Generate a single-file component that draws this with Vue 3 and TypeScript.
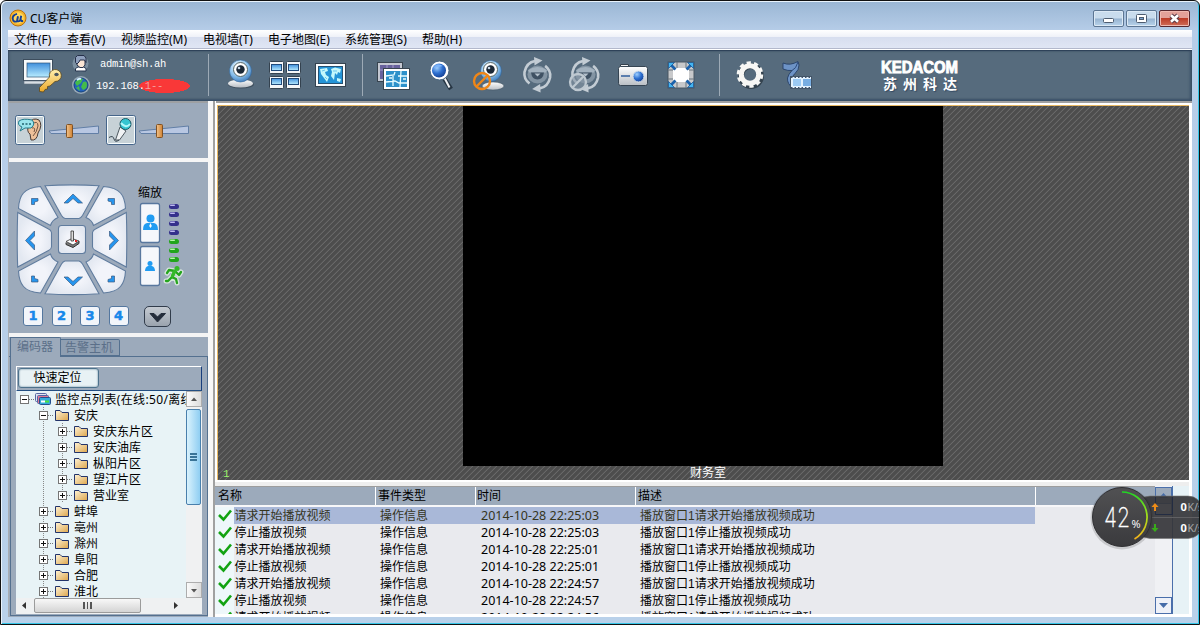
<script setup lang="ts">
interface TreeNode {
  label: string
  depth: number
  open?: boolean
}
interface EventRow {
  name: string
  kind: string
  time: string
  text: string
}

const menus: string[] = ['文件(F)', '查看(V)', '视频监控(M)', '电视墙(T)', '电子地图(E)', '系统管理(S)', '帮助(H)']

const nodes: TreeNode[] = [
  { label: '监控点列表(在线:50/离线', depth: 0, open: true },
  { label: '安庆', depth: 1, open: true },
  { label: '安庆东片区', depth: 2 },
  { label: '安庆油库', depth: 2 },
  { label: '枞阳片区', depth: 2 },
  { label: '望江片区', depth: 2 },
  { label: '营业室', depth: 2 },
  { label: '蚌埠', depth: 1 },
  { label: '亳州', depth: 1 },
  { label: '滁州', depth: 1 },
  { label: '阜阳', depth: 1 },
  { label: '合肥', depth: 1 },
  { label: '淮北', depth: 1 },
]

const times: string[] = ['22:25:03', '22:25:03', '22:25:01', '22:25:01', '22:24:57', '22:24:57', '22:24:56']
const rows: EventRow[] = times.map((t, i) => {
  const name = i % 2 === 0 ? '请求开始播放视频' : '停止播放视频'
  return { name, kind: '操作信息', time: '2014-10-28 ' + t, text: '播放窗口1' + name + '成功' }
})

const presets: number[] = [1, 2, 3, 4]
const purpleBars: number[] = [206, 214, 223, 232]
const greenBars: number[] = [241, 250, 259]
</script>

<template>
  <div class="window">
    <svg class="defs" width="0" height="0">
      <defs>
        <linearGradient id="sky" x1="0" y1="0" x2="0" y2="1">
          <stop offset="0" stop-color="#3f8fdc" /><stop offset="1" stop-color="#b8ecff" />
        </linearGradient>
        <linearGradient id="metal" x1="0" y1="0" x2="0" y2="1">
          <stop offset="0" stop-color="#ffffff" /><stop offset="1" stop-color="#b9bec4" />
        </linearGradient>
        <linearGradient id="key" x1="0" y1="0" x2="0" y2="1">
          <stop offset="0" stop-color="#fff0b0" /><stop offset="1" stop-color="#eda928" />
        </linearGradient>
        <linearGradient id="folder" x1="0" y1="0" x2="1" y2="1">
          <stop offset="0" stop-color="#fff3d6" /><stop offset="1" stop-color="#dda64c" />
        </linearGradient>
        <linearGradient id="knob" x1="0" y1="0" x2="1" y2="0">
          <stop offset="0" stop-color="#f3c48c" /><stop offset="1" stop-color="#cf8232" />
        </linearGradient>
        <radialGradient id="lens" cx=".35" cy=".3" r=".8">
          <stop offset="0" stop-color="#9fd0ff" /><stop offset=".5" stop-color="#2d6fd0" /><stop offset="1" stop-color="#123a8c" />
        </radialGradient>
        <radialGradient id="ball" cx=".4" cy=".3" r=".75">
          <stop offset="0" stop-color="#f4fbff" /><stop offset=".6" stop-color="#86bdea" /><stop offset="1" stop-color="#3c78b8" />
        </radialGradient>
        <radialGradient id="pad"><stop offset="0.4" stop-color="#f2f4fa" /><stop offset="1" stop-color="#e3e8f1" /></radialGradient>
      </defs>
    </svg>

    <header class="title">
      <svg class="logo" width="18" height="18" viewBox="0 0 18 18">
        <circle cx="9" cy="9" r="8" fill="#f4b52d" stroke="#b86f10" />
        <circle cx="9" cy="9" r="5.8" fill="#ffd65c" />
        <path d="M8 4.8Q3.5 6 3.7 9.5Q4.2 13.5 8 12.4L8.8 8.2M9 7.2L8.2 11Q8.5 13.4 11.2 11.5L12.2 6.8M11.7 10Q11.7 12.4 14 12" fill="none" stroke="#123f97" stroke-width="1.9" />
      </svg>
      <span class="title-text">CU客户端</span>
      <div class="buttons">
        <button class="wb"><svg width="29" height="15" viewBox="0 0 29 15"><rect x="9.500" y="7.500" width="10" height="4" rx="1" fill="#fff" stroke="#4d5c70" /></svg></button>
        <button class="wb"><svg width="29" height="15" viewBox="0 0 29 15"><rect x="9.500" y="3.500" width="10" height="8" rx="1" fill="#fff" stroke="#4d5c70" /><rect x="12.500" y="6.500" width="4" height="2" fill="#7ba4d0" stroke="#4d5c70" /></svg></button>
        <button class="wb close"><svg width="29" height="15" viewBox="0 0 29 15"><path d="M11 4.300L18 10.700M18 4.300L11 10.700" stroke="#5a3a46" stroke-width="4.600" /><path d="M11 4.300L18 10.700M18 4.300L11 10.700" stroke="#fff" stroke-width="2.600" /></svg></button>
      </div>
    </header>

    <div class="client">
      <nav class="menu"><span v-for="m in menus" :key="m">{{ m }}</span></nav>

      <div class="toolbar">
        <svg class="pc" width="60" height="51" viewBox="8 50 60 51">
          <rect x="23.500" y="59.500" width="29" height="21" fill="#f8fafb" stroke="#3d4d5d" />
          <rect x="27" y="63" width="23" height="14" fill="url(#sky)" stroke="#33567a" stroke-width=".7" />
          <rect x="24" y="81" width="29" height="3" fill="#d8dee4" stroke="#617080" stroke-width=".6" />
          <g fill="url(#key)" stroke="#5a481d" stroke-width=".8">
            <path d="M49.500 77L39.500 87.500V91.500L43.500 92L45 89.500L47.500 89V86.500L50 86L55 81.500A6 6 0 1 0 49.500 77Z" />
          </g>
          <ellipse cx="56.500" cy="74.500" rx="2.200" ry="1.800" fill="#4c5660" />
        </svg>
        <div class="account">
          <svg width="24" height="51" viewBox="68 50 24 51">
            <circle cx="80.500" cy="63.500" r="8" fill="#a9bccb" opacity=".45" />
            <path d="M75.500 71V68.500L78 67H83.500L86 68.500V71Z" fill="#fff" stroke="#24344f" />
            <path d="M77 59H85V65L83 67.500H80L77 65Z" fill="#fbe6d5" stroke="#29334a" />
            <path d="M75.500 62.500V57.500L77.500 55.500H84L86 58V62.500L84.500 60H80L79 62L77 64Z" fill="#8fa0bd" stroke="#26304a" />
            <circle cx="81" cy="85" r="9" fill="#bfcfd9" opacity=".6" />
            <circle cx="81" cy="85" r="7" fill="#2363bd" stroke="#17417b" />
            <path d="M75 83Q78 77 83 79L81 83L77 86ZM83 82Q87 80 87 85Q87 89 83 90L81 87ZM76 88L79 86L80 91Z" fill="#44bb4a" />
            <path d="M77 80Q79 78 81 79" stroke="#d7f0ff" stroke-width="2" fill="none" />
          </svg>
          <div class="creds"><span class="user">admin@sh.ah</span><span class="ip">192.168.<em>1--</em></span></div>
        </div>
        <svg width="148" height="51" viewBox="208 50 148 51">
          <path d="M208.500 54V96" stroke="#9daab6" />
          <ellipse cx="241" cy="84.500" rx="13" ry="4" fill="#40505f" /><ellipse cx="240.500" cy="83.500" rx="12.500" ry="4" fill="url(#metal)" />
          <circle cx="240.500" cy="71" r="11" fill="url(#ball)" stroke="#31649b" stroke-width=".6" />
          <circle cx="240.500" cy="69.500" r="7" fill="#fff" stroke="#566" /><circle cx="240.500" cy="69.500" r="4.200" fill="#1b2836" /><circle cx="239" cy="68" r="1.300" fill="#c5d5e5" />
          <g fill="#f4f6f8" stroke="#34424f">
            <rect x="269.500" y="61.500" width="14" height="12" rx="1" /><rect x="286.500" y="61.500" width="14" height="12" rx="1" />
            <rect x="269.500" y="76.500" width="14" height="12" rx="1" /><rect x="286.500" y="76.500" width="14" height="12" rx="1" />
          </g>
          <g fill="url(#sky)" stroke="#214b7b">
            <rect x="271.500" y="64.500" width="10" height="6" /><rect x="288.500" y="64.500" width="10" height="6" />
            <rect x="271.500" y="78.500" width="10" height="6" /><rect x="288.500" y="78.500" width="10" height="6" />
          </g>
          <rect x="315.500" y="63.500" width="30" height="23" fill="#fafcfd" stroke="#34424f" />
          <rect x="318.500" y="66.500" width="24" height="17" fill="#2494d7" stroke="#265273" />
          <path d="M320 69L327 68L328 71L325 72L326 75L329 77L327 82L324 78L321 74ZM331 69L335 67.500L341 69L340 73L338 72L337 75L335 73L334 80L331 76L332 72ZM337 78L341 79L340 82L337 81Z" fill="#c4f8fc" />
          <path d="M322 71L325 70M333 71H337M325 77L327 79" stroke="#6fc5ea" />
        </svg>
        <svg width="360" height="51" viewBox="356 50 360 51">
          <path d="M362.500 54V96" stroke="#9daab6" />
          <rect x="377.500" y="62.500" width="25" height="19" fill="#c4c8d2" stroke="#38444f" /><rect x="380" y="65" width="20" height="14" fill="#67619d" />
          <path d="M380 70H400M387 65V79M393 65V79" stroke="#a29dc8" />
          <rect x="383.500" y="68.500" width="26" height="21" fill="#fff" stroke="#38444f" /><rect x="386" y="71" width="21" height="16" fill="#2d91ca" />
          <path d="M386 76L394 75L395 72M398 76H407M386 82L395 81L399 83H407M393 76V86M401 71L400 87M389 78H392M403 79H406" stroke="#e7fcff" stroke-width="1.300" fill="none" />
          <path d="M444.500 79L451 89" stroke="#263543" stroke-width="4.500" /><path d="M444 77L449.500 87.500" stroke="#eef1f3" stroke-width="2" />
          <circle cx="439.500" cy="70.500" r="9.500" fill="#fff" stroke="#4d6882" /><circle cx="439" cy="70.500" r="7" fill="url(#lens)" />
          <path d="M434 68Q437 62 443 66Q438 67 434 68" fill="#7db4fa" />
          <ellipse cx="493" cy="86" rx="11" ry="4" fill="url(#metal)" stroke="#455766" stroke-width=".6" />
          <circle cx="491" cy="71" r="10.500" fill="url(#ball)" stroke="#31649b" stroke-width=".6" />
          <circle cx="490.500" cy="69.500" r="7" fill="#fff" stroke="#566" /><circle cx="490.500" cy="69.500" r="4.200" fill="#1b2836" /><circle cx="489" cy="68" r="1.300" fill="#c5d5e5" />
          <g fill="none" stroke="#ef8618" stroke-width="2.400"><circle cx="482" cy="81" r="8" /><path d="M476.500 86.500L487.500 75.500" /></g>
          <g id="cycle">
            <ellipse cx="537.500" cy="74.500" rx="10" ry="9" fill="#8394a3" />
            <path d="M528 70Q537.500 64 547 70L546 72.500H529Z" fill="#a3b2bf" />
            <path d="M531 72.500H544Q543 79.500 537.500 79.500Q532 79.500 531 72.500" fill="#3f5163" /><path d="M534.500 73.500H540.500L537.500 76.500Z" fill="#b5c2cd" />
            <g id="arm">
              <path d="M529.500 83.500Q523.500 79 524.500 72Q526.500 62.500 535 61" fill="none" stroke="#c3ccd4" stroke-width="2.600" />
              <path d="M534 57L542.500 60.500L534.500 65.500Z" fill="#c3ccd4" />
            </g>
            <use href="#arm" transform="rotate(180 537.300 74.700)" />
          </g>
          <use href="#cycle" x="48" />
          <circle cx="578" cy="82" r="8" fill="#8796a5" fill-opacity=".6" stroke="#bec8d0" stroke-width="2.300" /><path d="M572.500 87.500L583.500 76.500" stroke="#bec8d0" stroke-width="2.300" />
          <path d="M620.500 67V64.500H628.500V67" fill="#f0f1f3" stroke="#35414d" />
          <rect x="618.500" y="66.500" width="29" height="19" rx="2" fill="url(#metal)" stroke="#364553" />
          <path d="M621 76H630" stroke="#2f5e9c" stroke-width="1.700" /><circle cx="638.500" cy="76.500" r="5.500" fill="url(#lens)" stroke="#dce4ea" />
          <rect x="668" y="62" width="26" height="26" fill="#c8c9cb" stroke="#495662" />
          <path d="M668 70H694M668 79H694M677 62V88M686 62V88" stroke="#69747e" />
          <path d="M675 68H687V70H689V80H687V82H675V80H673V70H675Z" fill="#fff" />
          <path d="M675.500 69.500L670 64M686.500 69.500L692 64M675.500 80.500L670 86M686.500 80.500L692 86" stroke="#1b62ac" stroke-width="2.800" />
          <path d="M668.500 62.500H674.500L668.500 68.500ZM693.500 62.500V68.500L687.500 62.500ZM668.500 87.500V81.500L674.500 87.500ZM693.500 87.500H687.500L693.500 81.500Z" fill="#42b4f2" stroke="#164983" stroke-width=".7" />
        </svg>
        <svg width="110" height="51" viewBox="716 50 110 51">
          <path d="M719.500 54V96" stroke="#9daab6" />
          <circle cx="751" cy="76" r="10" fill="none" stroke="#34434f" stroke-width="6" />
          <g fill="none" stroke="#f7f7f5"><circle cx="750" cy="74.500" r="8.700" stroke-width="5" /><circle cx="750" cy="74.500" r="11.700" stroke-width="3.200" stroke-dasharray="4.200 3.150" /></g>
          <path d="M783 63Q790 66 798 61.500L799 65Q799 70 795 73.500Q791 76.500 792.500 80L793 88Q787 84 787.500 78Q788.500 74 792 70.500Q788 71 783 69Z" fill="#6d93c6" stroke="#263f67" stroke-width=".9" />
          <path d="M792 70.500Q796 69 798 62" fill="none" stroke="#2c4a7c" />
          <rect x="790.500" y="76.500" width="21" height="12" fill="#e4f3ff" stroke="#435568" /><rect x="793" y="79" width="8" height="7" fill="#9bcaf4" /><rect x="803" y="79" width="8" height="7" fill="#78aee3" />
          <path d="M791 77.500H812M791 87.500H812" stroke="#40526b" stroke-width="1.200" stroke-dasharray="1.500 2" />
        </svg>
        <div class="brand"><svg width="86" height="19" viewBox="0 0 86 19"><text x="5" y="15" textLength="77" lengthAdjust="spacingAndGlyphs">KEDACOM</text></svg><span>苏州科达</span></div>
      </div>

      <main class="body">
        <aside class="side">
          <svg class="audio" width="200" height="55" viewBox="8 103 200 55">
            <g fill="#c7d2d7" stroke="#45658a"><rect x="15.500" y="115.500" width="29" height="29" rx="2" /><rect x="106.500" y="115.500" width="29" height="29" rx="2" /></g>
            <g fill="none" stroke="#f6fbfd"><rect x="16.500" y="116.500" width="27" height="27" rx="1" /><rect x="107.500" y="116.500" width="27" height="27" rx="1" /></g>
            <path d="M29 123Q33 117 39 120Q43 125 38 133Q37 141 31 140L30 134Q26 132 29 123Z" fill="#eec19a" stroke="#493c36" />
            <path d="M32 124Q38 120 38 126Q37 132 33 136M32 128Q36 127 34 132" fill="none" stroke="#715442" />
            <path d="M19 121Q23 118 32 120Q36 124 31 128H25L20 131L22 127Q17 125 19 121Z" fill="#9be5ed" stroke="#247c8c" />
            <path d="M22 124H32" stroke="#236470" stroke-width="1.500" stroke-dasharray="2 1.500" />
            <path d="M120 127L126 131L119.500 140H115.500Z" fill="#f0f3f4" stroke="#4e5960" />
            <circle cx="125.500" cy="124" r="5.500" fill="#36c5d1" stroke="#205965" /><path d="M121 123Q126 129 130 124" fill="none" stroke="#b3f8fb" stroke-width="2" />
            <path d="M109 137.500Q113 135 114 139T119 140" fill="none" stroke="#35434e" />
            <g fill="#b8c7e2" stroke="#627fa6"><path d="M49 131L98.500 126V133.500H51Z" /><path d="M139 131L188.500 126V133.500H141Z" /></g>
            <g fill="url(#knob)" stroke="#815122"><rect x="66.500" y="124.500" width="6" height="13" rx="1" /><rect x="156.500" y="124.500" width="6" height="13" rx="1" /></g>
          </svg>

          <section class="ptz">
            <div class="ptz-top">
              <svg width="123" height="118" viewBox="8 180 123 118">
                <g fill="url(#pad)" stroke="#607c9e" stroke-width="1.100">
                  <path id="pn" d="M45 185.700Q72 184 99 185.700L82.500 215.500Q81 218 79 218.500H65Q63 218 61.500 215.500Z" />
                  <use href="#pn" transform="matrix(1 0 0 -1 0 479.500)" />
                  <path id="pw" d="M17.700 212.500Q16.700 240 17.700 267L48.500 250.500Q51 249.500 51.500 247V232.500Q51 230 48.500 229Z" />
                  <use href="#pw" transform="matrix(-1 0 0 1 144 0)" />
                  <path id="pc" d="M40.500 186.500Q28 187.500 23.500 193Q19 198 18.500 208.500L50.500 225.500Q52 220 58 217.500Z" />
                  <use href="#pc" transform="matrix(-1 0 0 1 144 0)" />
                  <use href="#pc" transform="matrix(1 0 0 -1 0 479.500)" />
                  <use href="#pc" transform="matrix(-1 0 0 -1 144 479.500)" />
                  <rect x="58.500" y="225.500" width="27" height="28" rx="3" />
                </g>
                <g fill="#2695ee" stroke="#3c5a80" stroke-width=".7">
                  <path id="an" d="M64 203L73 194L82.500 203H78L73 198.500L68 203Z" /><use href="#an" transform="matrix(1 0 0 -1 0 480)" />
                  <path id="aw" d="M34.500 231V236L30 240.500L34.500 245V250L25.500 240.500Z" /><use href="#aw" transform="matrix(-1 0 0 1 144 0)" />
                  <path id="ac" d="M31.500 204.500V198.500H38V201L34.500 202V204.500Z" />
                  <use href="#ac" transform="matrix(-1 0 0 1 146 0)" /><use href="#ac" transform="matrix(1 0 0 -1 0 480.500)" /><use href="#ac" transform="matrix(-1 0 0 -1 146 480.500)" />
                </g>
                <path d="M66 242.500V244.500L73 247.500L79 243.500V241" fill="#777" stroke="#333" />
                <path d="M66 241.500L72 238.500L79 241L73 245Z" fill="#fff" stroke="#333" stroke-width=".8" />
                <path d="M71 231H73.500V241H71Z" fill="#ddd" stroke="#333" stroke-width=".8" /><rect x="75" y="240" width="2" height="2" fill="#d22" />
              </svg>
              <div class="zoom">
                <span class="zoom-label">缩放</span>
                <svg width="60" height="90" viewBox="131 201 60 90">
                  <g fill="#f5f7fb" stroke="#58779e" stroke-width="1.300"><rect x="140.500" y="203.500" width="19" height="39" rx="2" /><rect x="140.500" y="246.500" width="19" height="39" rx="2" /></g>
                  <g fill="#219cf2"><circle cx="150.500" cy="218.500" r="4" /><path d="M147 223H154Q158 223.500 158 230H143Q143 223.500 147 223Z" /><circle cx="150" cy="263.500" r="2.500" /><path d="M148 266H152Q155 267 155 271H145Q145 267 148 266Z" /></g>
                  <path d="M150.500 223L151.800 226L150.500 228L149.200 226Z" fill="#fff" />
                  <g v-for="y in purpleBars" :key="y"><rect x="169" :y="y - 2" width="10" height="5" rx="2.500" fill="#34308c" /><rect x="170" :y="y - 1.500" width="5" height="1.500" rx=".7" fill="#bcb8f0" /></g>
                  <g v-for="y in greenBars" :key="y"><rect x="169" :y="y - 2" width="10" height="5" rx="2.500" fill="#22a51c" /><rect x="170" :y="y - 1.500" width="5" height="1.500" rx=".7" fill="#b6f7a7" /></g>
                  <g fill="none" stroke-linecap="round" stroke-linejoin="round">
                    <path d="M175 271L172 277L176 279L177 283M172 277L168 281H166M175 271L169 270L167 273M176 272L179 275L181 272" stroke="#d5e5dc" stroke-width="5" />
                    <path d="M175 271L172 277L176 279L177 283M172 277L168 281H166M175 271L169 270L167 273M176 272L179 275L181 272" stroke="#25a51d" stroke-width="2.300" />
                    <path d="M174.500 271.500L172.500 276" stroke="#35b92a" stroke-width="3.500" />
                  </g>
                  <circle cx="177" cy="268.500" r="2.500" fill="#35b92a" />
                </svg>
              </div>
            </div>
            <div class="presets">
              <button v-for="p in presets" :key="p">{{ p }}</button>
              <button class="more"><svg width="25" height="18" viewBox="0 0 25 18"><path d="M5 5.500H9L12.500 9L16 5.500H20.500L12.500 14Z" fill="#242d3b" stroke="#242d3b" /></svg></button>
            </div>
          </section>

          <section class="devices">
            <div class="tabs"><span class="tab on">编码器</span><span class="tab">告警主机</span></div>
            <div class="tab-body">
              <div class="search"><button>快速定位</button></div>
              <div class="tree">
                <div class="tree-view">
                  <div v-for="n in nodes" :key="n.label" class="node" :class="'d' + n.depth">
                    <svg class="twig" width="35" height="16" viewBox="0 0 35 16">
                      <path v-if="n.depth === 1" d="M7.500 0V16" stroke="#888" stroke-dasharray="1 1" />
                      <path v-if="n.depth === 2" d="M7.500 0V16M-11.500 0V16" stroke="#888" stroke-dasharray="1 1" />
                      <path d="M8 8.500H17" stroke="#777" stroke-dasharray="1 1" />
                      <rect x="3.500" y="4.500" width="8" height="8" fill="#fff" stroke="#757575" />
                      <path d="M5 8.500H10" stroke="#111" /><path v-if="!n.open" d="M7.500 6V11" stroke="#111" />
                      <g v-if="n.depth === 0">
                        <rect x="18.500" y="2.500" width="11" height="8" rx="1" fill="#dfe6f2" stroke="#5767a2" /><rect x="20.500" y="4.500" width="11" height="8" rx="1" fill="#df7896" stroke="#5265a3" />
                        <rect x="22.500" y="6.500" width="11" height="7" rx="1" fill="#35acda" stroke="#254f8e" /><path d="M24 10.500H28" stroke="#fff" stroke-width="2" /><path d="M28 10.500H32" stroke="#4be13f" stroke-width="2" />
                      </g>
                      <path v-else d="M19.500 13.500V3.500H24L26 5.500H32.500V13.500Z" fill="url(#folder)" stroke="#23346a" />
                    </svg>
                    <span>{{ n.label }}</span>
                  </div>
                </div>
                <div class="vbar"><i class="cap"><svg width="14" height="14"><path d="M4 9H10L7 5.500Z" fill="#555" /></svg></i><i class="thumb"><b></b><b></b><b></b></i><i class="gap"></i><i class="cap"><svg width="14" height="14"><path d="M4 6H10L7 9.500Z" fill="#555" /></svg></i></div>
              </div>
              <div class="hbar">
                <svg width="18" height="15"><path d="M10 4V11L6 7.500Z" fill="#333" /></svg>
                <i class="hthumb"><b></b><b></b><b></b></i>
                <svg width="45" height="15"><path d="M33 4V11L37 7.500Z" fill="#333" /></svg>
              </div>
            </div>
          </section>
        </aside>

        <div class="split"></div>

        <section class="right">
          <div class="video">
            <div class="screen"></div>
            <div class="caption"><span class="num">1</span><span class="room">财务室</span></div>
          </div>
          <div class="log">
            <div class="table">
              <div class="row head"><span>名称</span><span>事件类型</span><span>时间</span><span>描述</span><span></span></div>
              <div v-for="(r, i) in rows" :key="i" class="row" :class="{ sel: i === 0 }">
                <svg width="19" height="17" viewBox="0 0 19 17"><path d="M4 8L8.500 12.500L16 3.500" fill="none" stroke="#12a312" stroke-width="2.600" /></svg>
                <span class="c-name">{{ r.name }}</span><span class="c-kind">{{ r.kind }}</span><span class="c-time">{{ r.time }}</span><span class="c-text">{{ r.text }}</span>
              </div>
            </div>
            <div class="logbar"><i><svg width="15" height="15"><path d="M3 10H12L7.500 5Z" fill="#456ca9" /></svg></i><i class="track-top"></i><i class="track"></i><i><svg width="15" height="15"><path d="M3 5H12L7.500 10Z" fill="#456ca9" /></svg></i></div>
            <div class="edge"></div>
          </div>
        </section>
      </main>
    </div>

    <svg class="meter" width="116" height="72" viewBox="1084 482 116 72">
      <defs>
        <linearGradient id="mg" x1="0" y1="0" x2="0" y2="1"><stop offset="0" stop-color="#515153" /><stop offset="1" stop-color="#3a3a3d" /></linearGradient>
        <linearGradient id="arc" x1="0" y1="0" x2="0" y2="1"><stop offset="0" stop-color="#20d624" /><stop offset=".5" stop-color="#a5e21b" /><stop offset="1" stop-color="#f2b11c" /></linearGradient>
      </defs>
      <rect x="1135" y="496" width="68" height="42.500" rx="15" fill="#353538" fill-opacity=".92" stroke="#777" stroke-opacity=".6" />
      <path d="M1151 517.500H1200" stroke="#606063" />
      <path d="M1155.500 497V514.500H1172.500V497" stroke="#232c42" fill="none" />
      <circle cx="1122" cy="518" r="31.500" fill="#222" opacity=".16" />
      <circle cx="1122" cy="517" r="29.500" fill="url(#mg)" stroke="#303033" />
      <path d="M1122 492A25.200 25.200 0 0 1 1134.500 539" fill="none" stroke="url(#arc)" stroke-width="1.700" />
      <text class="m-big" x="1104" y="526.500" textLength="26" lengthAdjust="spacingAndGlyphs">42</text><text class="m-pct" x="1131.500" y="528">%</text>
      <path d="M1155 503L1158.500 507H1156V511H1154V507H1151.500Z" fill="#ee8c18" /><path d="M1155 532L1158.500 528H1156V524H1154V528H1151.500Z" fill="#39ad19" />
      <text class="m-val" x="1180.500" y="511">0</text><text class="m-unit" x="1187.500" y="511">K/s</text>
      <text class="m-val" x="1180.500" y="532">0</text><text class="m-unit" x="1187.500" y="532">K/s</text>
    </svg>
  </div>
</template>

<style>
html,
body {
  margin: 0;
  overflow: hidden;
}
</style>

<style scoped>
* {
  box-sizing: border-box;
}
svg {
  display: block;
  flex: none;
}
.defs {
  position: absolute;
}
i,
em {
  font-style: normal;
}
button {
  font: inherit;
  padding: 0;
  margin: 0;
}
.window {
  position: relative;
  width: 1200px;
  height: 625px;
  padding: 1px 7px 7px;
  overflow: hidden;
  border: 1px solid #111;
  border-radius: 6px 6px 0 0;
  background: linear-gradient(180deg, #9ab6d4 0, #b6cde8 30px, #b9d1ea 100%);
  box-shadow: inset 1px 1px 0 #e9f3fc, inset -1px -1px 0 #35c6e8;
  font: 12px/16px 'Liberation Sans', 'Noto Sans CJK SC', sans-serif;
  color: #000;
}
.title {
  display: flex;
  height: 28px;
}
.logo {
  margin: 7px 3px 0 1px;
}
.title-text {
  padding-top: 9px;
  font-family: 'Noto Sans', 'Noto Sans CJK SC', sans-serif;
}
.buttons {
  display: flex;
  gap: 2px;
  margin: 8px 2px 0 auto;
}
.wb {
  width: 31px;
  height: 17px;
  border: 1px solid #5c7693;
  border-radius: 2px;
  background: linear-gradient(#c9dced 0 48%, #96b3d0 52%, #b9d4ec);
  box-shadow: inset 0 0 0 1px #dce9f5;
}
.close {
  border-color: #57272e;
  background: linear-gradient(#e3a199 0 45%, #bd3c27 50%, #cf6d59);
  box-shadow: inset 0 0 0 1px #efb9b0;
}
.client {
  width: 1184px;
  height: 587px;
  background: #fff;
}
.menu {
  display: grid;
  grid-template-columns: 53px 54px 82px 65px 77px 77px 60px;
  height: 20px;
  padding: 2px 0 0 6px;
  font-family: 'Noto Sans', 'Noto Sans CJK SC', sans-serif;
  white-space: nowrap;
  background: linear-gradient(#fff 0, #eef1f8 35%, #d7deef 36%, #e0e6f4 90%, #a8aec4 92%, #fff 96%);
}
.toolbar {
  display: flex;
  height: 51px;
  background: #566b7d;
  box-shadow: inset 0 1px 1px #2d4057, inset 1px 0 3px #3b4f66, inset -2px 0 3px #3b4f66, inset 0 -2px 2px #3f556d;
}
.account {
  display: flex;
  width: 140px;
}
.creds {
  display: flex;
  flex-direction: column;
  padding: 6px 0 0 4px;
  color: #fff;
  font: 10.500px/16px 'Liberation Mono', monospace;
  letter-spacing: -0.3px;
}
.user {
  margin-left: 4px;
}
.ip {
  margin-top: 6px;
  width: 95px;
  letter-spacing: -0.2px;
  background: radial-gradient(ellipse at center, #f93838 70%, transparent 71%) 43px 1px / 51px 14px no-repeat;
}
.ip em {
  color: #f5a0a0;
}
.brand {
  width: 90px;
  margin-left: 50px;
  padding-top: 8px;
  color: #fff;
  text-shadow: 1px 1px 1px #344a63;
}
.brand text {
  fill: #fff;
  font: bold 16px 'Liberation Sans', sans-serif;
  stroke: #fff;
  stroke-width: 0.9px;
  text-shadow: none;
}
.brand span {
  display: block;
  margin: -1px 0 0 7px;
  font: bold 14px/15px 'Noto Sans CJK SC', sans-serif;
  letter-spacing: 6px;
  white-space: nowrap;
}
.body {
  display: flex;
  height: 516px;
}
.side {
  width: 200px;
  background: #9caabb;
  border-top: 2px solid #9da0a3;
  border-left: 1px solid #a8adb3;
}
.audio {
  margin-left: -1px;
}
.ptz {
  height: 175px;
  border-top: 4px solid #f6f6f6;
  padding-top: 18px;
}
.ptz-top {
  display: flex;
  height: 118px;
  margin-left: -1px;
}
.zoom {
  display: flex;
  flex-direction: column;
}
.zoom-label {
  height: 21px;
  padding: 5px 0 0 7px;
}
.presets {
  display: flex;
  gap: 8.500px;
  padding: 8px 0 0 14px;
}
.presets button {
  width: 20px;
  height: 20px;
  border: 1px solid #54779f;
  border-radius: 3px;
  background: #f2f5fa;
  color: #1788ea;
  font: bold 13px/18px 'DejaVu Sans', sans-serif;
  -webkit-text-stroke: 0.5px #1788ea;
}
.presets .more {
  width: 27px;
  height: 21px;
  margin-left: 7px;
  border: 1.500px solid #313c4b;
  border-radius: 5px;
  background: linear-gradient(#c5cbd2, #9aa3ae);
}
.more svg {
  margin-left: -0.5px;
}
.devices {
  height: 280px;
  border-top: 4px solid #f4f4f4;
}
.tabs {
  display: flex;
  align-items: flex-end;
  height: 20px;
  padding-left: 1px;
  border-bottom: 1px solid #54708f;
}
.tab {
  width: 59px;
  height: 17px;
  padding: 0 0 0 4px;
  border: 1px solid #54708f;
  border-left: 0;
  border-radius: 0 2px 0 0;
  color: #5b6f89;
  background: #8f9fb2;
  line-height: 17px;
}
.tab.on {
  width: 51px;
  height: 20px;
  margin-bottom: -1px;
  padding-left: 6px;
  border-left: 1px solid #54708f;
  border-bottom: 0;
  background: #9caabb;
  line-height: 19px;
}
.tab-body {
  width: 198px;
  height: 259px;
  margin-left: 1px;
  padding: 9px 5px 0;
  border: 1px solid #54708f;
  border-top: 0;
}
.search {
  width: 186px;
  height: 25px;
  padding: 1px 1px;
  border: 1px solid #fff;
  border-right-color: #173d7b;
  border-bottom-color: #234e82;
}
.search button {
  display: block;
  width: 81px;
  height: 20px;
  padding-right: 2px;
  border: 1px solid #4d728c;
  border-radius: 3px;
  background: #e8f2f5;
  line-height: 19px;
  box-shadow: inset 0 0 2px #4d728c;
}
.tree {
  display: flex;
  width: 186px;
  height: 207px;
  background: #e8f3f6;
}
.tree-view {
  width: 170px;
  height: 207px;
  overflow: hidden;
}
.node {
  display: flex;
  height: 16px;
  white-space: nowrap;
}
.node span {
  margin-left: 3px;
  line-height: 17px;
  font-family: 'Noto Sans', 'Noto Sans CJK SC', sans-serif;
}
.d0 span {
  letter-spacing: 0.35px;
}
.d0 {
  padding-left: 1px;
}
.d1 {
  padding-left: 20px;
}
.d2 {
  padding-left: 39px;
}
.twig {
  overflow: visible;
}
.vbar {
  display: flex;
  flex-direction: column;
  width: 16px;
  background: #f0f1f2;
}
.cap {
  height: 16px;
  border: 1px solid #adadad;
  background: linear-gradient(90deg, #fafafa, #ddd);
}
.thumb {
  display: flex;
  flex-direction: column;
  align-items: center;
  justify-content: center;
  gap: 1px;
  height: 96px;
  margin: 2px 1px 0 0;
  border: 1px solid #497fac;
  border-radius: 2px;
  background: linear-gradient(90deg, #d9f2fd, #8fcef2);
}
.thumb b {
  width: 7px;
  height: 2px;
  background: #3a7497;
}
.gap {
  flex: 1;
}
.hbar {
  display: flex;
  height: 16px;
  width: 186px;
  background: #eff1f2;
}
.hthumb {
  display: flex;
  align-items: center;
  justify-content: center;
  gap: 2px;
  width: 107px;
  height: 15px;
  border: 1px solid #9b9b9b;
  border-radius: 2px;
  background: linear-gradient(#f8f8f8, #d4d4d4);
}
.hthumb b {
  width: 1.500px;
  height: 7px;
  background: #555;
}
.split {
  width: 8px;
  background: linear-gradient(90deg, #f7f7f7 0 5px, #a1a1a1 5px 7px, #fff 7px);
}
.right {
  width: 976px;
  border-top: 2px solid #a0a0a0;
}
.video {
  width: 974px;
  height: 379px;
  border: 1px solid #fff;
  border-top-width: 2px;
  border-bottom-width: 2px;
  padding: 1px 0 0 1px;
  background: linear-gradient(#e9b963, #e9b963) 0 0 / 100% 1px no-repeat, linear-gradient(#e9b963, #e9b963) 0 0 / 1px 100% no-repeat,
    repeating-linear-gradient(135deg, #4d4d4d 0 2.600px, #686868 3.200px, #686868 3.600px, #4d4d4d 4.243px);
}
.screen {
  width: 480px;
  height: 360px;
  margin-left: 245px;
  background: #000;
}
.caption {
  display: flex;
  height: 14px;
  color: #fff;
  line-height: 15px;
}
.num {
  width: 472px;
  padding: 2px 0 0 5px;
  color: #9cf36c;
  font: 11px/13px 'Liberation Mono', monospace;
}
.log {
  display: flex;
  width: 974px;
  height: 133px;
  margin-left: -1px;
  border-top: 4px solid #eee;
  border-bottom: 1px solid #fff;
  box-shadow: inset 0 1px 0 #9d9d9d;
  background: #e9eaee;
}
.table {
  width: 940px;
  height: 128px;
  padding-top: 1px;
  overflow: hidden;
}
.row {
  display: flex;
  height: 17px;
  white-space: nowrap;
  line-height: 18px;
}
.row svg {
  background: #eef7fa;
}
.head {
  height: 20px;
  border-bottom: 2px solid #f7f7f9;
  background: #9caabb;
  line-height: 19px;
}
.head span {
  width: 160px;
  padding-left: 1px;
  border-right: 1px solid #fff;
}
.head span:first-child {
  width: 161px;
  padding-left: 3px;
}
.head span:nth-child(2) {
  width: 100px;
  padding-left: 2px;
}
.head span:nth-child(4) {
  width: 400px;
  padding-left: 2px;
}
.head span:last-child {
  flex: 1;
  border: 0;
}
.c-name {
  width: 142px;
  padding-left: 0.5px;
}
.c-kind {
  width: 100px;
  padding-left: 4px;
}
.c-time {
  width: 160px;
  padding-left: 5px;
  font-family: 'Noto Sans', sans-serif;
  font-size: 12.500px;
  line-height: 17px;
}
.c-text {
  width: 399px;
  padding-left: 4px;
}
.sel span {
  background: #a9b8d8;
  color: #35351d;
}
.logbar {
  display: flex;
  flex-direction: column;
  width: 18px;
  padding-top: 1px;
  background: #f0f1f4;
  border-right: 1px solid #4a6fab;
}
.logbar i {
  height: 17px;
  border: 1px solid #4a6fab;
  background: #eef1f8;
}
.logbar .track-top {
  height: 11px;
  border-top: 0;
}
.logbar .track {
  flex: 1;
  height: auto;
  border: 0;
  background: #f0f1f4;
}
.logbar i:first-child {
  background: #9caabb;
}
.edge {
  flex: 1;
  background: #e7f2f6;
}
.meter {
  position: absolute;
  right: -1px;
  top: 481px;
}
.m-big {
  fill: #fff;
  font: 200 27px Inter, Lato, sans-serif;
  stroke: #fff;
  stroke-width: 0.3px;
}
.m-pct {
  fill: #fff;
  font: 11px 'Open Sans', sans-serif;
}
.m-val {
  fill: #fff;
  font: bold 11px 'Noto Sans', sans-serif;
}
.m-unit {
  fill: #aaa;
  font: 10.500px 'Noto Sans', sans-serif;
}
</style>
